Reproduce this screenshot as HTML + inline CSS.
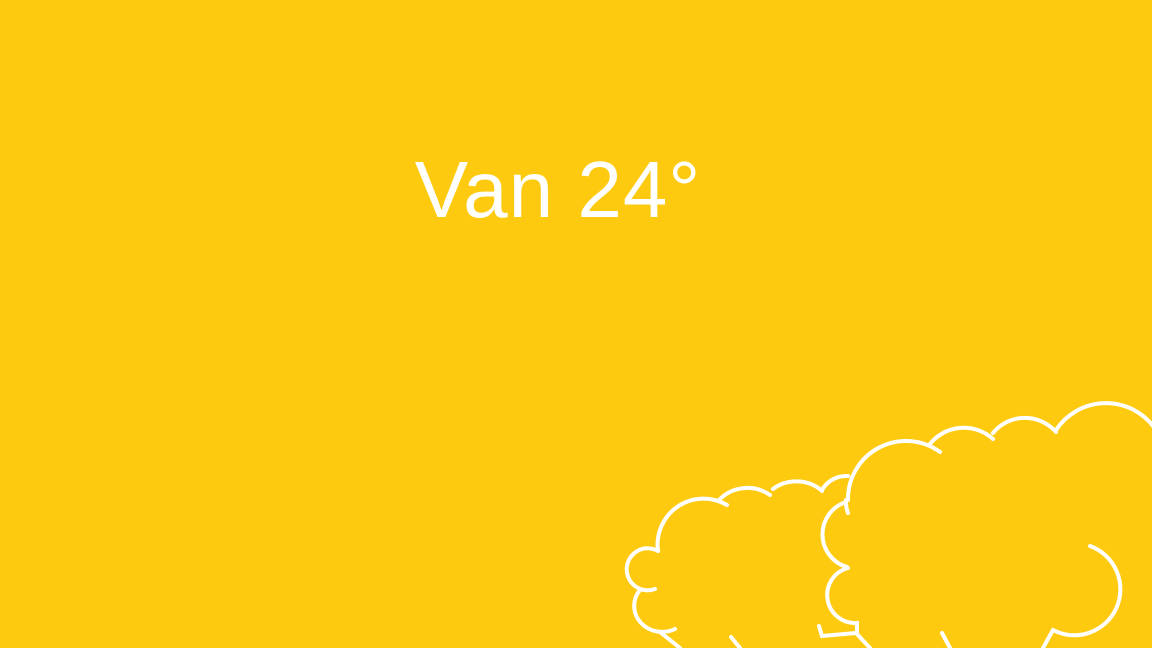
<!DOCTYPE html>
<html><head><meta charset="utf-8"><style>
html,body{margin:0;padding:0;}
body{width:1152px;height:648px;background:#FECA10;overflow:hidden;position:relative;}
.t{position:absolute;left:-18px;width:1152px;top:140px;text-align:center;color:#fff;font-family:"Comic Sans MS","Liberation Sans",sans-serif;font-size:80px;line-height:100px;letter-spacing:1px;}
svg{position:absolute;left:0;top:0;}
</style></head><body>
<div class="t">Van 24°</div>
<svg width="1152" height="648" viewBox="0 0 1152 648" fill="none" stroke="#fff" stroke-width="4" stroke-linecap="round">
<!-- left cloud -->
<path d="M658 551 A21 21 0 1 0 655 589"/>
<path d="M640 590 A28 26 0 0 0 675 629"/>
<path d="M660 632 L680 648"/>
<path d="M731 637 L740 648"/>
<path d="M658 551 A46 46 0 0 1 727 505"/>
<path d="M720 499 A38 36 0 0 1 770 495"/>
<path d="M773 489 A36 32 0 0 1 822 491"/>
<path d="M822 490 A28 28 0 0 1 848 476"/>
<path d="M819 626 L822 636 L856 633 L870 648"/>
<!-- right cloud -->
<path d="M848 513 A30 30 0 0 1 846 500"/>
<path d="M846 502 A34 34 0 0 0 847 567"/>
<path d="M848 568 A28 28 0 0 0 857 623 L857 632"/>
<path d="M848 500 A58 58 0 0 1 940 452"/>
<path d="M930 444 A42 40 0 0 1 993 439"/>
<path d="M993 433 A40 38 0 0 1 1056 432"/>
<path d="M1056 430 A60 60 0 0 1 1156 430"/>
<path d="M1090 546 A46 46 0 1 1 1053 630 L1043 648"/>
<path d="M942 633 L950 648"/>
</svg>
</body></html>
